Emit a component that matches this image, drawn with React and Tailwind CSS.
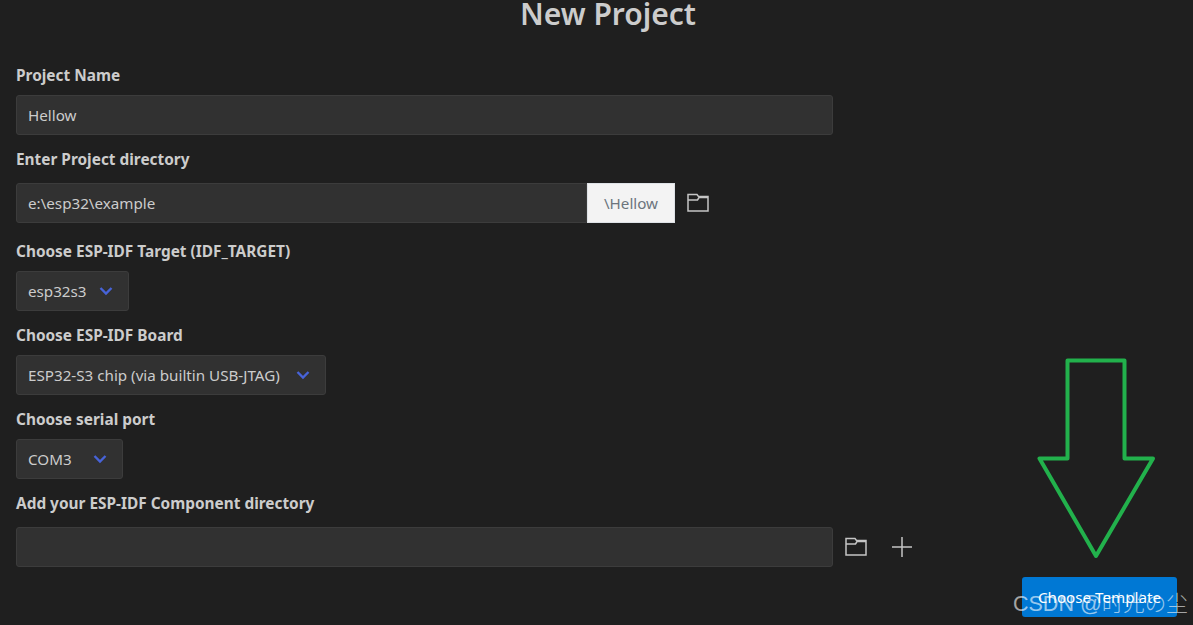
const font = "[font-family:'Noto_Sans',sans-serif]";

function Label({ children }) {
  return <label className="block h-5 text-[15.4px] leading-[22px] font-bold text-[#cccccc]">{children}</label>;
}

function FolderIcon() {
  return (
    <svg width="22" height="20" viewBox="0 0 22 20" fill="none" stroke="#c5c5c5" strokeWidth="1.5">
      <path d="M1 1.500h9l1.500 2h9.500v14.500h-20z" />
      <path d="M1 7h9.500l1.500-2.500h9" />
    </svg>
  );
}

function Select({ value, width }) {
  return (
    <div className={`mt-[10px] flex h-10 items-center justify-between rounded-[3px] border border-[#3c3c3c] bg-[#313131] pl-[11px] pr-[15px] text-[#cccccc] ${width}`}>
      <span>{value}</span>
      <svg width="14" height="10" viewBox="0 0 14 10" fill="none" stroke="#4763d8" strokeWidth="2.4">
        <path d="M1.500 2l5.500 5.500 5.500-5.500" />
      </svg>
    </div>
  );
}

export default function App() {
  return (
    <div className={`relative h-[625px] w-[1193px] overflow-hidden bg-[#1f1f1f] px-4 text-[15.2px] ${font}`}>
      <h1 className="h-[65px] pl-[23px] text-center text-[30px] leading-[28px] font-semibold text-[#cccccc]">New Project</h1>

      <Label>Project Name</Label>
      <div className="mt-[10px] flex h-10 w-[817px] items-center rounded-[3px] border border-[#3c3c3c] bg-[#313131] px-[11px] text-[#cccccc]">Hellow</div>

      <div className="mt-[14px]"><Label>Enter Project directory</Label></div>
      <div className="mt-[14px] flex items-center">
        <div className="flex h-10 w-[571px] items-center rounded-l-[3px] border border-[#3c3c3c] bg-[#313131] px-[11px] text-[#cccccc]">e:\esp32\example</div>
        <div className="flex h-10 w-[88px] items-center justify-center border border-[#dee2e6] bg-[#f3f3f3] text-[#6c757d]">\Hellow</div>
        <div className="ml-3"><FolderIcon /></div>
      </div>

      <div className="mt-[18px]"><Label>Choose ESP-IDF Target (IDF_TARGET)</Label></div>
      <Select value="esp32s3" width="w-[113px]" />

      <div className="mt-[14px]"><Label>Choose ESP-IDF Board</Label></div>
      <Select value="ESP32-S3 chip (via builtin USB-JTAG)" width="w-[310px]" />

      <div className="mt-[14px]"><Label>Choose serial port</Label></div>
      <Select value="COM3" width="w-[107px]" />

      <div className="mt-[14px]"><Label>Add your ESP-IDF Component directory</Label></div>
      <div className="mt-[14px] flex items-center">
        <div className="h-10 w-[817px] rounded-[3px] border border-[#3c3c3c] bg-[#313131]" />
        <div className="ml-3"><FolderIcon /></div>
        <svg className="ml-[25px]" width="20" height="20" viewBox="0 0 20 20" fill="none" stroke="#c5c5c5" strokeWidth="1.5">
          <path d="M0 10h20M10 0v20" />
        </svg>
      </div>

      <div className="mt-[10px] flex justify-end">
        <button className="h-10 w-[155px] rounded-[3px] bg-[#0078d4] text-white">Choose Template</button>
      </div>

      <svg className="absolute top-[350px] left-[1030px]" width="135" height="215" viewBox="0 0 135 215" fill="none" stroke="#22b14c" strokeWidth="4" strokeLinejoin="round">
        <path d="M37.500 10.500h57v98h28.500L66 206 9.500 108.500h28z" />
      </svg>

      <div className="absolute top-[589px] left-[1013px] text-[21.5px] leading-[30px] font-light whitespace-nowrap text-white/60 [font-family:'Liberation_Sans','Noto_Sans_CJK_SC',sans-serif]">CSDN @时光の尘</div>
    </div>
  );
}
